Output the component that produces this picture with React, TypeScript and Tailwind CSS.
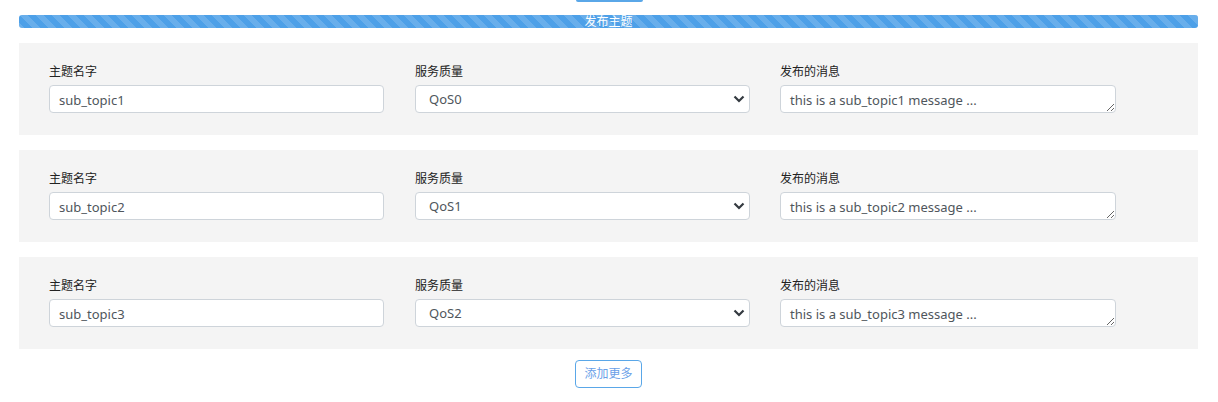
import React from "react";

const rows = [
  { topic: "sub_topic1", qos: "QoS0" },
  { topic: "sub_topic2", qos: "QoS1" },
  { topic: "sub_topic3", qos: "QoS2" },
];

function Row({ topic, qos }: { topic: string; qos: string }) {
  return (
    <div className="bg-[#f4f4f4] h-[92px] pt-[20px] pl-[30px] flex gap-[30px]">
      <div className="w-[336px] flex flex-col">
        <label className="text-[12px] leading-[18px] text-[#222] mb-[4px]">主题名字</label>
        <input
          readOnly
          value={topic}
          className="h-[28px] w-[335px] bg-white border border-[#ced4da] rounded-[4px] px-[9px] pt-[2px] text-[13px] text-[#4f565c] outline-none"
        />
      </div>
      <div className="w-[335px] flex flex-col">
        <label className="text-[12px] leading-[18px] text-[#222] mb-[4px]">服务质量</label>
        <div className="relative h-[28px] w-full bg-white border border-[#ced4da] rounded-[4px] flex items-center pl-[13px] pt-[2px] text-[13px] text-[#4f565c]">
          {qos}
          <svg className="absolute right-[4px] top-[9px]" width="12" height="8" viewBox="0 0 12 8">
            <path d="M1.5 1.5 L6 6 L10.5 1.5" fill="none" stroke="#343a40" strokeWidth="2.2" />
          </svg>
        </div>
      </div>
      <div className="w-[336px] flex flex-col">
        <label className="text-[12px] leading-[18px] text-[#222] mb-[4px]">发布的消息</label>
        <textarea
          readOnly
          rows={1}
          value={`this is a ${topic} message ...`}
          className="h-[28px] w-full bg-white border border-[#ced4da] rounded-[4px] px-[9px] py-[5px] text-[13px] leading-[18px] text-[#4f565c] outline-none resize-y overflow-hidden"
        />
      </div>
    </div>
  );
}

export default function App() {
  return (
    <div className="w-[1218px] h-[402px] bg-white overflow-hidden font-['Noto_Sans','Noto_Sans_CJK_SC',sans-serif]">
      <div className="flex justify-center">
        <div className="w-[67px] h-[2px] bg-[#5aa7e8] rounded-b-[2px]" />
      </div>
      <div className="pl-[19px] pr-[20px] pt-[13px]">
        <div className="h-[13px] rounded-[3px] bg-[#4da0e8] bg-[linear-gradient(45deg,rgba(255,255,255,.15)_25%,transparent_25%,transparent_50%,rgba(255,255,255,.15)_50%,rgba(255,255,255,.15)_75%,transparent_75%,transparent)] bg-[length:16px_16px] flex items-center justify-center text-white text-[12px] leading-[13px]">
          发布主题
        </div>
        <div className="mt-[15px] flex flex-col gap-[15px]">
          {rows.map((r) => (
            <Row key={r.topic} topic={r.topic} qos={r.qos} />
          ))}
        </div>
        <div className="flex justify-center mt-[11px]">
          <button className="w-[67px] h-[28px] border border-[#5aa7e8] rounded-[4px] text-[12px] text-[#6a9fe8] bg-white">
            添加更多
          </button>
        </div>
      </div>
    </div>
  );
}
